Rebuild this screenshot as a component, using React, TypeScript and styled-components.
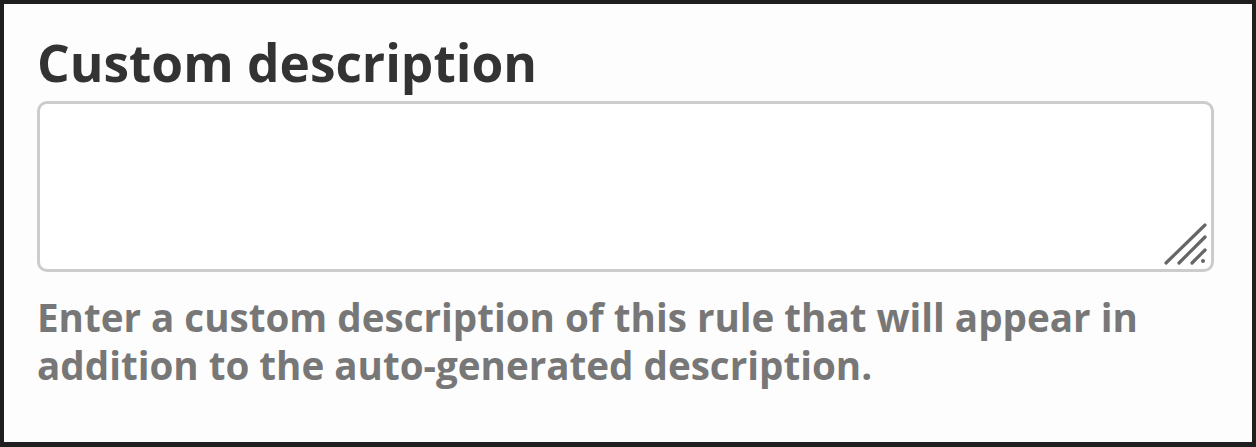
import styled, { createGlobalStyle } from "styled-components";

const GlobalStyle = createGlobalStyle`
  html, body {
    margin: 0;
    padding: 0;
    background: #ffffff;
  }
  * {
    box-sizing: border-box;
  }
`;

const Frame = styled.div`
  width: 1256px;
  height: 447px;
  border: 4px solid #1f1f1f;
  border-bottom-width: 5px;
  background: #fdfdfd;
  padding: 26px 38px 0 33px;
  font-family: "Open Sans", "Liberation Sans", sans-serif;
`;

const Field = styled.div`
  display: flex;
  flex-direction: column;
`;

const Label = styled.label`
  font-size: 51.4px;
  font-weight: 700;
  line-height: 64px;
  color: #333333;
  margin-bottom: 7px;
`;

const InputWrap = styled.div`
  position: relative;
  width: 100%;
`;

const TextArea = styled.textarea`
  display: block;
  width: 100%;
  height: 171px;
  border: 3px solid #cccccc;
  border-radius: 10px;
  background: #ffffff;
  resize: none;
  outline: none;
  font-family: inherit;
  font-size: 36px;
  padding: 10px 14px;
`;

const Grip = styled.svg`
  position: absolute;
  right: 5px;
  bottom: 6px;
  width: 46px;
  height: 44px;
  pointer-events: none;
`;

const Help = styled.p`
  margin: 21px 0 0;
  font-size: 38.6px;
  font-weight: 700;
  line-height: 48px;
  color: #777777;
`;

const ResizeGrip = () => (
  <Grip viewBox="0 0 46 44">
    <g stroke="#666" strokeWidth="3.2" strokeLinecap="round">
      <line x1="3" y1="41" x2="42" y2="3" />
      <line x1="16" y1="41" x2="42" y2="15" />
      <line x1="29" y1="41" x2="42" y2="28" />
    </g>
    <circle cx="40" cy="39" r="2" fill="#666" />
  </Grip>
);

export default function App() {
  return (
    <>
      <GlobalStyle />
      <Frame>
        <Field>
          <Label htmlFor="custom-description">Custom description</Label>
          <InputWrap>
            <TextArea id="custom-description" />
            <ResizeGrip />
          </InputWrap>
          <Help>
            Enter a custom description of this rule that will appear in
            addition to the auto-generated description.
          </Help>
        </Field>
      </Frame>
    </>
  );
}
